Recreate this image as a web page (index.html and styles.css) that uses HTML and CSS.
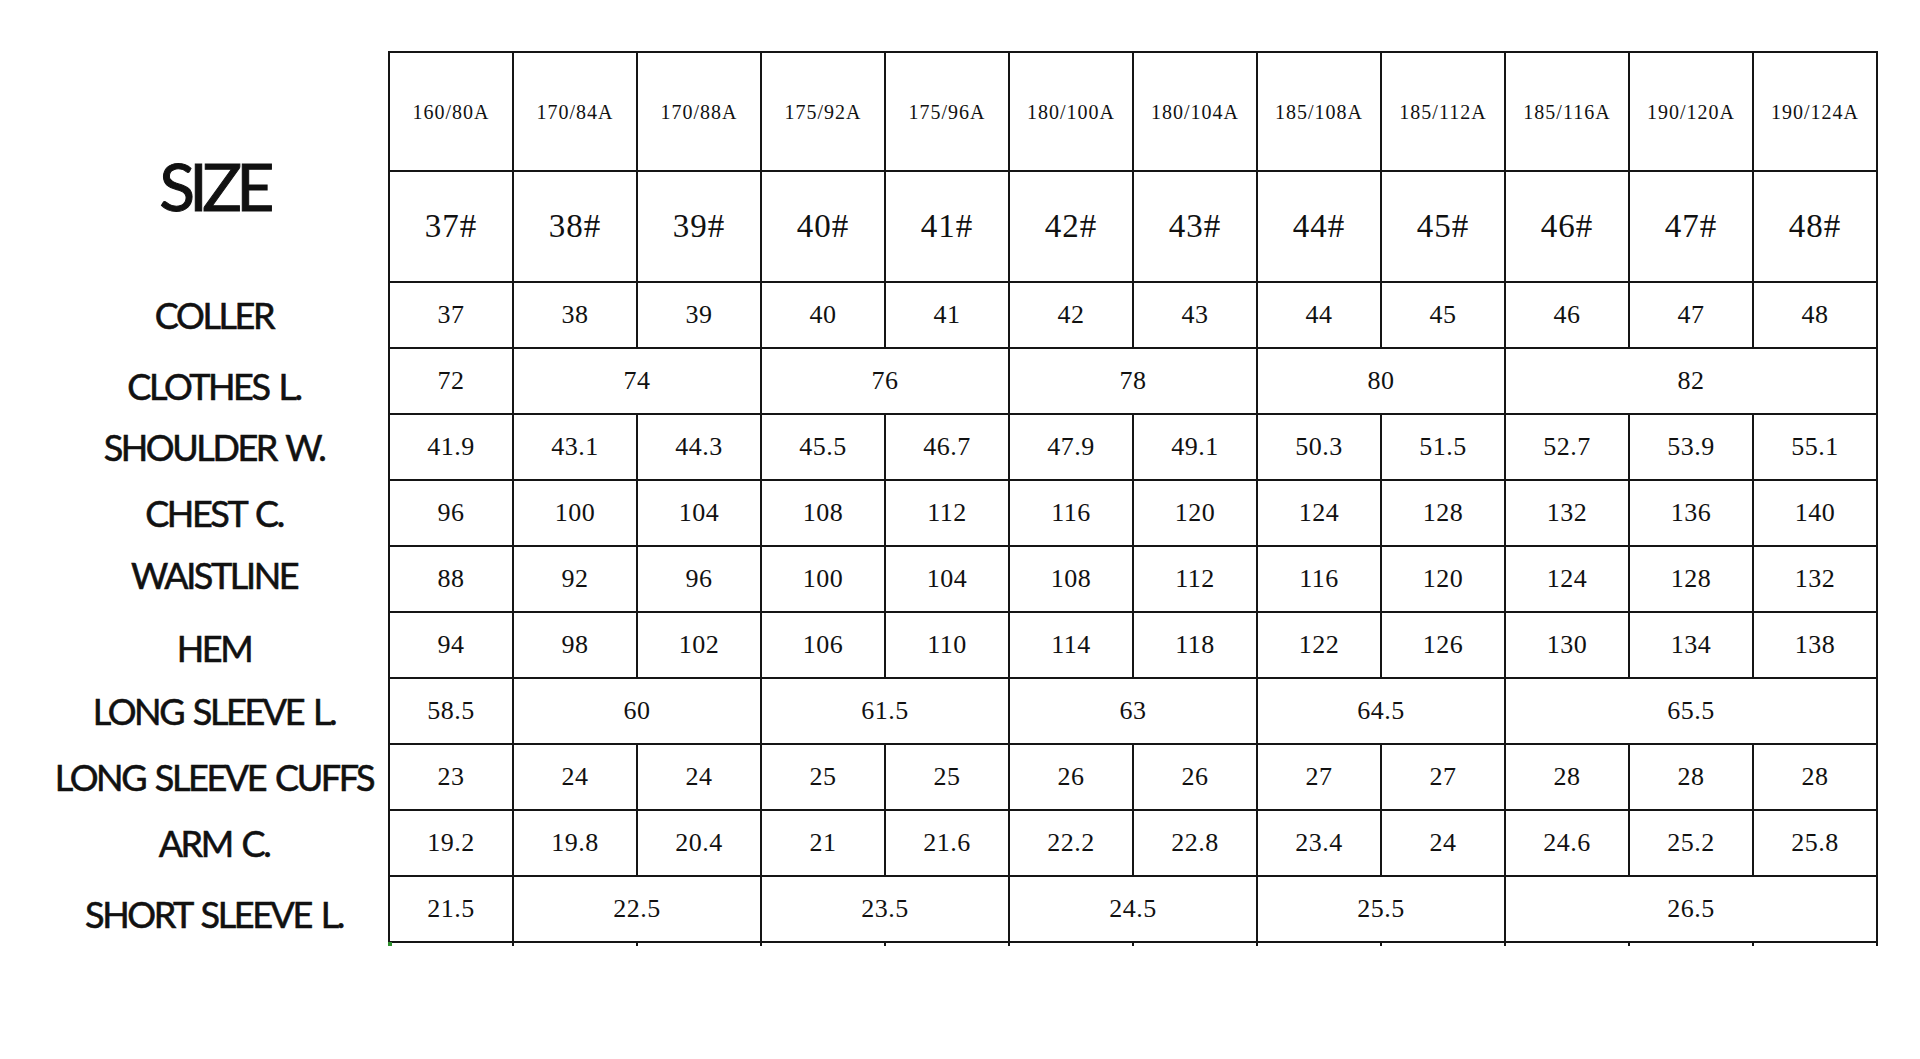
FILE: index.html
```html
<!DOCTYPE html>
<html lang="en">
<head>
<meta charset="utf-8">
<title>Size chart</title>
<link rel="stylesheet" href="styles.css">
</head>
<body>
<main class="sheet">
  <div class="labels">
    <div class="label label-size">SIZE</div>
    <div class="label">COLLER</div>
    <div class="label down">CLOTHES L.</div>
    <div class="label">SHOULDER W.</div>
    <div class="label">CHEST C.</div>
    <div class="label up">WAISTLINE</div>
    <div class="label down-s">HEM</div>
    <div class="label">LONG SLEEVE L.</div>
    <div class="label">LONG SLEEVE CUFFS</div>
    <div class="label">ARM C.</div>
    <div class="label down">SHORT SLEEVE L.</div>
  </div>
  <div class="chart">
    <div class="grid">
      <div class="cell head">160/80A</div><div class="cell head">170/84A</div><div class="cell head">170/88A</div><div class="cell head">175/92A</div><div class="cell head">175/96A</div><div class="cell head">180/100A</div><div class="cell head">180/104A</div><div class="cell head">185/108A</div><div class="cell head">185/112A</div><div class="cell head">185/116A</div><div class="cell head">190/120A</div><div class="cell head">190/124A</div>

      <div class="cell num">37#</div><div class="cell num">38#</div><div class="cell num">39#</div><div class="cell num">40#</div><div class="cell num">41#</div><div class="cell num">42#</div><div class="cell num">43#</div><div class="cell num">44#</div><div class="cell num">45#</div><div class="cell num">46#</div><div class="cell num">47#</div><div class="cell num">48#</div>

      <div class="cell">37</div><div class="cell">38</div><div class="cell">39</div><div class="cell">40</div><div class="cell">41</div><div class="cell">42</div><div class="cell">43</div><div class="cell">44</div><div class="cell">45</div><div class="cell">46</div><div class="cell">47</div><div class="cell">48</div>

      <div class="cell">72</div><div class="cell s2">74</div><div class="cell s2">76</div><div class="cell s2">78</div><div class="cell s2">80</div><div class="cell s3">82</div>

      <div class="cell">41.9</div><div class="cell">43.1</div><div class="cell">44.3</div><div class="cell">45.5</div><div class="cell">46.7</div><div class="cell">47.9</div><div class="cell">49.1</div><div class="cell">50.3</div><div class="cell">51.5</div><div class="cell">52.7</div><div class="cell">53.9</div><div class="cell">55.1</div>

      <div class="cell">96</div><div class="cell">100</div><div class="cell">104</div><div class="cell">108</div><div class="cell">112</div><div class="cell">116</div><div class="cell">120</div><div class="cell">124</div><div class="cell">128</div><div class="cell">132</div><div class="cell">136</div><div class="cell">140</div>

      <div class="cell">88</div><div class="cell">92</div><div class="cell">96</div><div class="cell">100</div><div class="cell">104</div><div class="cell">108</div><div class="cell">112</div><div class="cell">116</div><div class="cell">120</div><div class="cell">124</div><div class="cell">128</div><div class="cell">132</div>

      <div class="cell">94</div><div class="cell">98</div><div class="cell">102</div><div class="cell">106</div><div class="cell">110</div><div class="cell">114</div><div class="cell">118</div><div class="cell">122</div><div class="cell">126</div><div class="cell">130</div><div class="cell">134</div><div class="cell">138</div>

      <div class="cell">58.5</div><div class="cell s2">60</div><div class="cell s2">61.5</div><div class="cell s2">63</div><div class="cell s2">64.5</div><div class="cell s3">65.5</div>

      <div class="cell">23</div><div class="cell">24</div><div class="cell">24</div><div class="cell">25</div><div class="cell">25</div><div class="cell">26</div><div class="cell">26</div><div class="cell">27</div><div class="cell">27</div><div class="cell">28</div><div class="cell">28</div><div class="cell">28</div>

      <div class="cell">19.2</div><div class="cell">19.8</div><div class="cell">20.4</div><div class="cell">21</div><div class="cell">21.6</div><div class="cell">22.2</div><div class="cell">22.8</div><div class="cell">23.4</div><div class="cell">24</div><div class="cell">24.6</div><div class="cell">25.2</div><div class="cell">25.8</div>

      <div class="cell">21.5</div><div class="cell s2">22.5</div><div class="cell s2">23.5</div><div class="cell s2">24.5</div><div class="cell s2">25.5</div><div class="cell s3">26.5</div>
    </div>
    <div class="ticks">
      <span></span><span></span><span></span><span></span><span></span><span></span><span></span><span></span><span></span><span></span><span></span><span></span><span></span>
    </div>
  </div>
</main>
</body>
</html>
```

FILE: styles.css
```css
* {
  box-sizing: border-box;
}

html, body {
  margin: 0;
  padding: 0;
  background: #ffffff;
}

body {
  width: 1920px;
  height: 1059px;
  overflow: hidden;
  color: #111111;
}

.sheet {
  display: flex;
  align-items: flex-start;
  padding: 51px 0 0 40px;
}

.labels {
  width: 348px;
  display: grid;
  grid-template-rows: 117px 109px repeat(10, 64px);
  row-gap: 2px;
  padding-top: 2px;
}

.label {
  display: flex;
  align-items: center;
  justify-content: center;
  font-family: "Lato", "Liberation Sans", sans-serif;
  font-weight: 400;
  font-size: 36px;
  line-height: 1;
  letter-spacing: -2.4px;
  word-spacing: 3px;
  -webkit-text-stroke: 0.6px #111111;
  color: #111111;
  white-space: nowrap;
}

.label-size {
  grid-row: span 2;
  padding-top: 38px;
  font-size: 66px;
  letter-spacing: -5.6px;
  -webkit-text-stroke: 1px #111111;
}

.label.down {
  padding-top: 9px;
}

.label.down-s {
  padding-top: 6px;
}

.label.up {
  padding-bottom: 9px;
}

.chart {
  position: relative;
}

.chart::after {
  content: "";
  position: absolute;
  left: 0;
  bottom: 0;
  width: 4px;
  height: 4px;
  background: #2f8f2f;
}

.grid {
  display: grid;
  grid-template-columns: repeat(12, 122px);
  grid-template-rows: 117px 109px repeat(10, 64px);
  gap: 2px;
  padding: 2px;
  background: #151515;
}

.cell {
  background: #ffffff;
  display: flex;
  align-items: center;
  justify-content: center;
  font-family: "Liberation Serif", "Times New Roman", serif;
  font-size: 26px;
  line-height: 1;
  letter-spacing: 0.5px;
  color: #111111;
}

.cell.head {
  font-size: 20px;
  letter-spacing: 1px;
}

.cell.num {
  font-size: 33px;
  letter-spacing: 1px;
}

.s2 {
  grid-column: span 2;
}

.s3 {
  grid-column: span 3;
}

.ticks {
  display: grid;
  grid-template-columns: repeat(12, 124px) 2px;
  height: 3px;
}

.ticks span {
  border-left: 2px solid #151515;
}
```
